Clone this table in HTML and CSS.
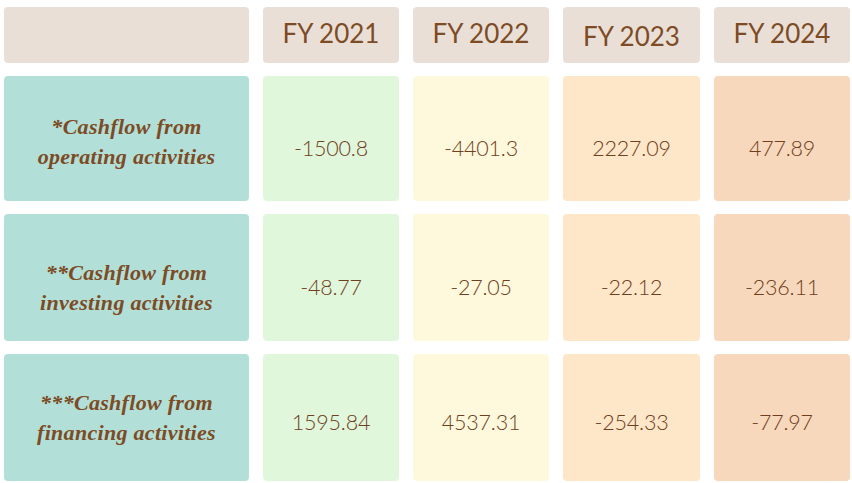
FILE: index.html
```html
<!DOCTYPE html>
<html>
<head>
<meta charset="utf-8">
<link rel="stylesheet" href="styles.css">
</head>
<body>
<div class="table">
  <div class="cell head"></div>
  <div class="cell head">FY 2021</div>
  <div class="cell head">FY 2022</div>
  <div class="cell head low">FY 2023</div>
  <div class="cell head">FY 2024</div>

  <div class="cell label r1"><span>*Cashflow from<br>operating activities</span></div>
  <div class="cell num r1 c1">-1500.8</div>
  <div class="cell num r1 c2">-4401.3</div>
  <div class="cell num r1 c3">2227.09</div>
  <div class="cell num r1 c4">477.89</div>

  <div class="cell label r2"><span>**Cashflow from<br>investing activities</span></div>
  <div class="cell num r2 c1">-48.77</div>
  <div class="cell num r2 c2">-27.05</div>
  <div class="cell num r2 c3">-22.12</div>
  <div class="cell num r2 c4">-236.11</div>

  <div class="cell label r3"><span>***Cashflow from<br>financing activities</span></div>
  <div class="cell num r3 c1">1595.84</div>
  <div class="cell num r3 c2">4537.31</div>
  <div class="cell num r3 c3">-254.33</div>
  <div class="cell num r3 c4">-77.97</div>
</div>
</body>
</html>
```

FILE: styles.css
```css
html, body {
  margin: 0;
  padding: 0;
  background: #ffffff;
}
body {
  padding: 7px 0 0 4px;
}
.table {
  display: grid;
  grid-template-columns: 245px 136px 136px 137px 136px;
  grid-template-rows: 56px 125px 127px 127px;
  column-gap: 14px;
  row-gap: 13px;
  color: #7d4b24;
}
.cell {
  border-radius: 4px;
  display: flex;
  align-items: center;
  justify-content: center;
  text-align: center;
  box-sizing: border-box;
}
.head {
  background: #e9dfd7;
  font-family: "Lato", "DejaVu Sans", sans-serif;
  font-size: 26px;
  padding-bottom: 4px;
}
.head.low {
  padding-bottom: 0;
  padding-top: 2px;
}
.label {
  background: #b2e0d9;
  font-family: "Liberation Serif", "DejaVu Serif", serif;
  font-style: italic;
  font-weight: bold;
  font-size: 22px;
  line-height: 30px;
  letter-spacing: 0.3px;
}
.label.r1 { padding-top: 6px; }
.label.r2 { padding-top: 20px; }
.label.r3 { padding-top: 1px; }
.num {
  font-family: "Lato", "DejaVu Sans", sans-serif;
  font-size: 21.5px;
  font-weight: 300;
  letter-spacing: -0.2px;
  color: #6f4020;
}
.num.r1 { padding-top: 19px; }
.num.r2 { padding-top: 19px; }
.num.r3 { padding-top: 9px; }
.c1 { background: #e1f7dc; }
.c2 { background: #fef8dd; }
.c3 { background: #fee6c8; }
.c4 { background: #f7d8bc; }
```
